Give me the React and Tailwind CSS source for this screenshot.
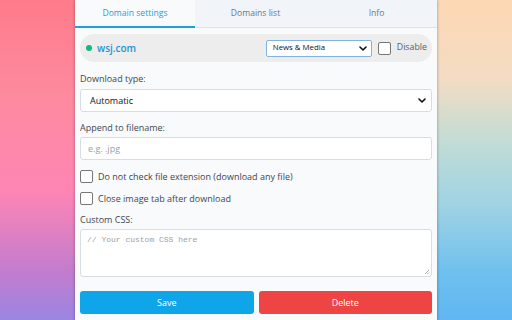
import React from "react";

function Chevron({ className = "" }) {
  return (
    <svg className={className} width="8" height="5" viewBox="0 0 8 5" fill="none">
      <path d="M1 1l3 3 3-3" stroke="#111" strokeWidth="1.6" strokeLinecap="round" strokeLinejoin="round" />
    </svg>
  );
}

function Box() {
  return <div className="w-[13px] h-[13px] shrink-0 rounded-[2px] border border-[#767676] bg-white" />;
}

export default function App() {
  return (
    <div className="flex w-[512px] h-[320px] overflow-hidden" style={{ fontFamily: '"Open Sans", "Noto Sans", sans-serif' }}>
      <div className="w-[75px] shrink-0 bg-[linear-gradient(180deg,#fe7b8a_0%,#fd8a9f_30%,#fd85b4_60%,#c27ccf_85%,#9b86e2_100%)]" />
      <div className="w-[362px] shrink-0 bg-[#f8fafc] flex flex-col shadow-[0_0_3px_rgba(0,0,0,0.35)] z-10">
        <div className="flex h-[28px] bg-[#f1f5f9] border-b border-[#dde3ea] text-[8.6px]">
          <div className="w-[120px] flex items-center justify-center bg-[#f8fafc] text-[#1ea0dc] border-b-2 border-[#1ea0dc] -mb-px">Domain settings</div>
          <div className="w-[121px] flex items-center justify-center text-[#6b7785]">Domains list</div>
          <div className="flex-1 flex items-center justify-center text-[#6b7785]">Info</div>
        </div>
        <div className="px-[5px] pt-[6px] flex flex-col">
          <div className="h-[28px] rounded-full bg-[#ededed] flex items-center pl-[6px] pr-[5px]">
            <div className="w-[6px] h-[6px] rounded-full bg-[#10b981] mr-[5px]" />
            <span className="text-[10px] font-semibold text-[#1e94d4]">wsj.com</span>
            <div className="ml-auto flex items-center">
              <div className="w-[106px] h-[17px] bg-white border border-[#7fb3e0] rounded-[2px] flex items-center pl-[6px] pr-[4px] text-[7.8px] text-[#111]">
                <span>News &amp; Media</span>
                <Chevron className="ml-auto" />
              </div>
              <div className="ml-[6px]"><Box /></div>
              <span className="ml-[6px] text-[8.8px] text-[#55606c]">Disable</span>
            </div>
          </div>
          <div className="mt-[10px] text-[9px] text-[#3f4750] leading-[14px]">Download type:</div>
          <div className="mt-[3px] h-[23px] bg-white border border-[#d6dde4] rounded-[3px] flex items-center pl-[9px] pr-[5px] text-[9px] text-[#111]">
            <span>Automatic</span>
            <Chevron className="ml-auto" />
          </div>
          <div className="mt-[9px] text-[9px] text-[#3f4750] leading-[14px]">Append to filename:</div>
          <div className="mt-[2px] h-[23px] bg-white border border-[#d6dde4] rounded-[3px] flex items-center pl-[7px] text-[9px] text-[#9aa1a8]">e.g. .jpg</div>
          <div className="mt-[10px] flex items-center h-[13px]">
            <Box />
            <span className="ml-[5px] text-[9px] text-[#3f4750]">Do not check file extension (download any file)</span>
          </div>
          <div className="mt-[9px] flex items-center h-[13px]">
            <Box />
            <span className="ml-[5px] text-[9px] text-[#3f4750]">Close image tab after download</span>
          </div>
          <div className="mt-[8px] text-[9px] text-[#3f4750] leading-[14px]">Custom CSS:</div>
          <div className="mt-[2px] h-[48px] bg-white border border-[#d6dde4] rounded-[3px] relative pl-[6px] pt-[4px] text-[8px] leading-[12px] text-[#9aa1a8]" style={{ fontFamily: '"Liberation Mono", monospace' }}>
            // Your custom CSS here
            <svg className="absolute right-[1px] bottom-[1px]" width="6" height="6" viewBox="0 0 6 6">
              <path d="M5 1L1 5M5 3.5L3.5 5" stroke="#999" strokeWidth="0.8" />
            </svg>
          </div>
          <div className="mt-[14px] flex gap-[5px]">
            <div className="flex-1 h-[23px] rounded-[3px] bg-[#0ea5e9] text-white text-[9px] flex items-center justify-center">Save</div>
            <div className="flex-1 h-[23px] rounded-[3px] bg-[#ef4444] text-white text-[9px] flex items-center justify-center">Delete</div>
          </div>
        </div>
      </div>
      <div className="flex-1 bg-[linear-gradient(180deg,#fed8b4_0%,#f3dcc4_25%,#c0dcd6_45%,#9ed2e4_65%,#6fc0ee_85%,#5fb6f2_100%)]" />
    </div>
  );
}
